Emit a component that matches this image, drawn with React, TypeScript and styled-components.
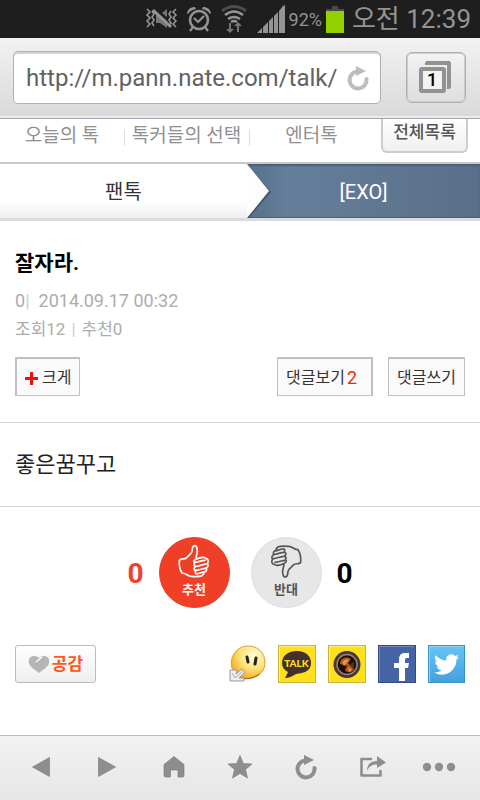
import React from "react";
import styled, { createGlobalStyle } from "styled-components";
import { FaTwitter } from "react-icons/fa";

const GlobalStyle = createGlobalStyle`
  *, *::before, *::after { box-sizing: border-box; }
  body { margin: 0; background: #fff; }
  button, input { font: inherit; color: inherit; margin: 0; }
  button { cursor: pointer; }
  a { color: inherit; text-decoration: none; }
  svg { display: block; flex: none; }
`;

const Page = styled.div`
  display: flex;
  flex-direction: column;
  min-height: 100vh;
  font-family: Roboto, "Noto Sans CJK KR", sans-serif;
  background: #fff;
  color: #333;
`;

/* Device status bar */
const StatusBar = styled.div`
  display: flex;
  align-items: center;
  justify-content: flex-end;
  gap: 8px;
  height: 38px;
  padding-right: 9px;
  background: #1e1e1e;
  color: #949494;
  white-space: nowrap;
`;
const Signal = styled.div`
  display: flex;
  align-items: center;
  gap: 4px;
  font-size: 18px;
`;
const Clock = styled.time`
  font-size: 26px;
  line-height: 36px;
`;

/* Address bar */
const AddressBar = styled.form`
  display: flex;
  align-items: center;
  gap: 25px;
  height: 81px;
  padding: 0 14px 2px 13px;
  background: linear-gradient(#f2f2f2, #d9d9d9);
  border-bottom: 1px solid #a5a5b0;
  box-shadow: inset 0 -2px 0 #ececec;
`;
const UrlField = styled.div`
  display: flex;
  align-items: center;
  gap: 6px;
  flex: 1;
  min-width: 0;
  height: 53px;
  padding: 2px 10px 0 12px;
  background: #fff;
  border: 1px solid #b0b0b8;
  border-radius: 5px;
  box-shadow: inset 0 2px 1px #d2d2d6;
`;
const UrlInput = styled.input`
  flex: 1;
  min-width: 0;
  padding: 0;
  border: 0;
  outline: 0;
  background: transparent;
  font-size: 24px;
  line-height: 32px;
  color: #626262;
`;
const PlainButton = styled.button`
  display: flex;
  align-items: center;
  justify-content: center;
  padding: 0;
  border: 0;
  background: none;
`;
const WindowsButton = styled(PlainButton)`
  width: 60px;
  height: 51px;
  border: 1px solid #aeaeae;
  border-radius: 6px;
  background: linear-gradient(#f3f3f3, #dedede);
  box-shadow: inset 0 0 0 1px #ccc;
`;

/* Category tabs */
const Tabs = styled.nav`
  display: grid;
  grid-template-columns: 124fr 125fr 125fr 94fr;
  height: 45px;
  padding-right: 12px;
  border-bottom: 2px solid #c8c8c8;
  font-size: 19px;
  line-height: 34px;
  color: #909090;
  white-space: nowrap;
`;
const Tab = styled.a`
  display: flex;
  justify-content: center;
  position: relative;
  & + &::before {
    content: "";
    position: absolute;
    left: 0;
    top: 10px;
    height: 17px;
    border-left: 1px solid #ddd;
  }
`;
const AllButton = styled.button`
  justify-self: end;
  width: 87px;
  height: 34px;
  padding: 0 0 6px;
  border: 2px solid #ccc;
  border-top: 0;
  border-radius: 0 0 6px 6px;
  background: linear-gradient(#fff, #efefef);
  font-size: 17px;
  line-height: 24px;
  font-weight: 500;
  color: #555;
`;

/* Breadcrumb */
const Crumbs = styled.nav`
  display: grid;
  grid-template-columns: 247fr 233fr;
  border-bottom: 3px solid #dadae0;
  font-size: 20px;
  line-height: 52px;
  text-align: center;
`;
const ParentCrumb = styled.a`
  padding-top: 2px;
  background: linear-gradient(#fff 70%, #eee);
`;
const CurrentCrumb = styled.a`
  position: relative;
  padding-top: 2px;
  background: linear-gradient(90deg, #567089, #657f9b 18%, #5a6e89);
  box-shadow: inset 0 2px 1px #4b607a, inset 0 -1px 1px #4b607a;
  color: #fff;
`;
const CrumbArrow = styled.svg`
  position: absolute;
  left: 0;
  top: 0;
`;

/* Article */
const Article = styled.article`
  flex: 1;
`;
const Header = styled.header`
  padding: 26px 15px 26px;
  border-bottom: 1px solid #d6d6d6;
`;
const Title = styled.h1`
  margin: 0 0 7px;
  font-size: 21px;
  line-height: 32px;
  font-weight: 700;
  color: #000;
`;
const Meta = styled.p`
  display: flex;
  gap: ${(p: { $small?: boolean }) => (p.$small ? 6 : 9)}px;
  margin: 0;
  font-size: ${(p: { $small?: boolean }) => (p.$small ? 17 : 18)}px;
  line-height: 29px;
  color: #acacac;
`;
const Divider = styled.span`
  color: #ccc;
`;
const Actions = styled.div`
  display: flex;
  gap: 15px;
  margin-top: 13px;
`;
const ActionButton = styled.button`
  display: flex;
  align-items: center;
  gap: 4px;
  height: 39px;
  padding: 2px 8px 0;
  border: 1px solid #bfbfc5;
  border-top-width: 2px;
  background: #fafafa;
  font-size: 16px;
  line-height: 24px;
  white-space: nowrap;
`;
const LargerButton = styled(ActionButton)`
  margin-right: auto;
  border-left-width: 2px;
`;
const CommentsButton = styled(ActionButton)`
  gap: 2px;
  padding-right: 14px;
  border-right-width: 2px;
`;
const CommentCount = styled.span`
  font-size: 18px;
  color: #f0280a;
`;
const Body = styled.p`
  margin: 0;
  padding: 25px 15px;
  border-bottom: 1px solid #d6d6d6;
  font-size: 22px;
  line-height: 33px;
  color: #222;
`;
const Votes = styled.div`
  display: flex;
  align-items: center;
  justify-content: center;
  gap: 15px;
  padding: 30px 0 37px;
`;
const VoteCount = styled.output`
  padding-top: 2px;
  font-size: 28px;
  line-height: 32px;
  font-weight: 700;
  color: ${(p: { $up?: boolean }) => (p.$up ? "#ef4030" : "#000")};
`;
const VoteGroup = styled.div`
  display: flex;
  gap: 21px;
`;
const VoteButton = styled.button<{ $up?: boolean }>`
  display: flex;
  flex-direction: column;
  align-items: center;
  width: 71px;
  height: 71px;
  padding: 6px 0 0;
  border: 1px solid ${(p) => (p.$up ? "#e84025" : "#dedede")};
  border-radius: 50%;
  background: ${(p) => (p.$up ? "#ef4027" : "#e7e7e7")};
  color: ${(p) => (p.$up ? "#fff" : "#555")};
  font-size: 13px;
  line-height: 20px;
  font-weight: 700;
`;
const ShareRow = styled.div`
  display: flex;
  align-items: center;
  justify-content: space-between;
  padding: 0 15px;
`;
const LikeButton = styled.button`
  display: flex;
  align-items: center;
  justify-content: center;
  gap: 2px;
  width: 81px;
  height: 38px;
  padding: 0;
  border: 1px solid #bbb;
  border-radius: 3px;
  background: linear-gradient(#fff, #eee);
  font-size: 17px;
  line-height: 24px;
  font-weight: 700;
  color: #ff5722;
`;
const ShareLinks = styled.div`
  display: flex;
  gap: 12px;
`;

/* Browser toolbar */
const Toolbar = styled.nav`
  display: grid;
  grid-template-columns: repeat(7, 1fr);
  height: 65px;
  padding: 0 8px 2px;
  border-top: 1px solid #bbb;
  background: linear-gradient(#f2f2f2, #e6e6e6);
  color: #8e8e8a;
`;

const ReloadIcon = ({ color }: { color: string }) => (
  <svg width="24" height="26" viewBox="0 0 24 26" fill="none">
    <path d="M11 6.500A8.500 8.500 0 1 0 20.500 14" stroke={color} strokeWidth="4" strokeLinecap="round" />
    <path d="M10 1 20 6 10 11Z" fill={color} />
  </svg>
);

const VibrateIcon = () => (
  <svg width="33" height="24" viewBox="0 0 33 24" fill="none" stroke="#949494" strokeWidth="2">
    <path d="M2 2 5 5 2 8 5 11 2 14 5 17 2 20M7 4l2 3-2 3 2 3-2 3 2 3M31 2l-3 3 3 3-3 3 3 3-3 3 3 3M26 4l-2 3 2 3-2 3 2 3-2 3" strokeWidth="1.6" />
    <path d="M11 8h4l7 6v7l-7-5h-4ZM17 6l5-4v8Z" fill="#777" stroke="none" />
    <path d="M8 3 26 20" strokeWidth="3" />
  </svg>
);
const AlarmIcon = () => (
  <svg width="26" height="26" viewBox="0 0 26 26" fill="none" stroke="#949494">
    <circle cx="13" cy="14" r="9" strokeWidth="2.6" />
    <path d="m8 12 4 4 6-6M7 21l-3 4M19 21l3 4" strokeWidth="2.2" />
    <path d="M1 7C2 3 5 1 9 1l1 2C6 4 4 5 2 8ZM25 7C24 3 21 1 17 1l-1 2c4 1 6 2 8 5Z" fill="#949494" stroke="none" />
  </svg>
);
const WifiIcon = () => (
  <svg width="28" height="28" viewBox="0 0 28 28" fill="none">
    <path d="M2 6Q14-3 26 6" stroke="#4c4c4c" strokeWidth="3" />
    <path d="M5 10Q14 3 23 10M8 14q6-4 12 0M11 17q3-2 6 0" stroke="#949494" strokeWidth="2.6" />
    <path d="M9 18v6H6l4 4 4-4h-3v-6ZM17 27v-6h-3l4-4 4 4h-3v6Z" fill="#777" />
  </svg>
);
const BarsIcon = () => (
  <svg width="29" height="28" viewBox="0 0 29 28" fill="#949494">
    <path d="M1 28 6 23V28ZM7 28V22l5-5V28ZM13 28V16l4-4V28ZM18 28V11l4-4V28ZM23 28V6l4-5 2-1V28Z" />
  </svg>
);
const BatteryIcon = () => (
  <svg width="18" height="28" viewBox="0 0 18 28">
    <path d="M6 1h6v3h6v2H0V4h6Z" fill="#4a4a4a" />
    <path d="M0 6h18v22H0Z" fill="#92d000" />
  </svg>
);
const WindowsIcon = () => (
  <svg width="36" height="34" viewBox="0 0 36 34">
    <path d="M9 5V3h22v24h-2" fill="none" stroke="#929292" strokeWidth="4" strokeLinejoin="round" />
    <rect x="3" y="9" width="23" height="22" rx="1" fill="#f3f3f3" stroke="#929292" strokeWidth="4" />
    <text x="14" y="26" textAnchor="middle" fontSize="18" fontFamily="Roboto" fontWeight="500" fill="#000">1</text>
  </svg>
);

const Thumb = ({ down }: { down?: boolean }) => (
  <svg width="34" height="36" viewBox="205 71 102 108" fill="none" stroke="currentColor" strokeWidth="5" strokeLinecap="round" strokeLinejoin="round">
    <g transform={down ? "rotate(180 256 123)" : undefined}>
      <path d="M258 76C250 77 251 87 250 93C248 101 239 106 233 113C227 118 214 113 212 121C211 134 214 149 220 158C229 157 236 167 248 168C260 169 274 169 280 166C286 162 286 158 285 155C292 156 297 148 292 143C299 141 300 132 296 129C301 123 299 115 291 114C286 108 277 111 263 116C260 107 270 96 265 84C264 78 262 76 258 76Z" />
      <path d="M263 116C255 119 253 125 257 126C266 127 278 120 289 120M259 127C254 132 256 138 260 138C272 138 282 132 293 131M260 139C253 145 257 151 262 150C271 150 281 145 290 144M262 151C257 157 261 162 267 160L285 155" />
    </g>
  </svg>
);

const HeartIcon = () => (
  <svg width="22" height="18" viewBox="0 0 22 18" fill="#b5b5b5">
    <path d="M11 18C6 14 2 12 1 8C0 3 3 1 6 1C9 1 10 2 11 3C12 2 13 1 16 1C19 1 22 3 21 8C20 12 16 14 11 18Z" />
    <path d="M8 7 14 2" stroke="#fff" strokeWidth="1.4" />
  </svg>
);

const EmoticonIcon = () => (
  <svg width="37" height="38" viewBox="0 0 37 38">
    <defs>
      <radialGradient id="face" cx=".65" cy=".3" r=".75">
        <stop offset="0" stopColor="#fffde0" />
        <stop offset=".55" stopColor="#fee272" />
        <stop offset="1" stopColor="#f5a51d" />
      </radialGradient>
    </defs>
    <path d="M19 1C29 1 36 8 36 17S31 31 23 33 6 32 3 23C0 13 7 1 19 1Z" fill="url(#face)" stroke="#dc9c43" />
    <path d="m18 12 1 5M27 13l-1 6" stroke="#292015" strokeWidth="3" strokeLinecap="round" />
    <path d="M6 31C12 35 23 35 30 29" stroke="#a35a26" fill="none" />
    <path d="M1 25h7l-1 4 6-5 3 3-6 6h5v3H1Z" fill="#eee" stroke="#999" />
    <path d="m3 28 3 5 8-7" stroke="#aaa" fill="none" />
  </svg>
);
const TalkIcon = () => (
  <svg width="38" height="38" viewBox="0 0 38 38">
    <rect x=".5" y=".5" width="37" height="37" fill="#ffe01c" stroke="#c9b340" />
    <path d="M1.5 36V1.5H36" fill="none" stroke="#fff078" />
    <path d="M19 6C28 6 33 11 33 18S28 28 18 29C15 31 11 33 7 33L10 27C6 25 4 22 4 18 4 10 11 6 19 6Z" fill="#44312f" />
    <text x="18.5" y="22" textAnchor="middle" fontFamily="Lato" fontWeight="900" fontSize="10" fill="#ffe01c">TALK</text>
  </svg>
);
const StoryIcon = () => (
  <svg width="38" height="38" viewBox="0 0 38 38">
    <rect x=".5" y=".5" width="37" height="37" fill="#ffe01c" stroke="#c9b340" />
    <path d="M1.5 36V1.5H36" fill="none" stroke="#fff078" />
    <circle cx="19" cy="19.5" r="13.5" fill="#493536" />
    <circle cx="19" cy="19.5" r="10" fill="#1c0f0c" stroke="#958577" strokeWidth="1.5" />
    <path d="M12 19C12 13 18 11 23 14L20 18 26 24C23 29 18 27 17 25L19 21Z" fill="#b6541c" />
    <path d="m14 17 4-3 3 1-5 6ZM20 22l4 3-3 2Z" fill="#e29845" />
    <path d="m21 20 5-3v6Z" fill="#493c16" />
  </svg>
);
const FacebookIcon = () => (
  <svg width="38" height="38" viewBox="0 0 38 38">
    <rect x=".5" y=".5" width="37" height="37" fill="#4563a5" stroke="#304b88" />
    <path d="M1.5 36V1.5H36" fill="none" stroke="#7188bd" />
    <path d="M21 36V23H16V18H21V15C21 10 23 8 27 8H31V13H29C27 13 27 14 27 18H31L30 23H27V36Z" fill="#fff" />
  </svg>
);
const TwitterTile = styled.span`
  display: grid;
  place-items: center;
  width: 37px;
  height: 38px;
  border: 1px solid #3a93c9;
  background: linear-gradient(#67c4f3, #43a1e0);
  box-shadow: inset 1px 1px 0 #8bd3f7;
  color: #fff;
  font-size: 25px;
`;

const ShareIcon = () => (
  <svg width="28" height="24" viewBox="0 0 28 24" fill="none">
    <path d="M12 4H2.500V20.500H21.500V16" stroke="currentColor" strokeWidth="2.600" strokeLinejoin="round" strokeLinecap="round" />
    <path d="M8 16C8 9 12 6 18 6V1L27 7.500 18 13V9.500C13 9.500 10 11 8 16Z" fill="currentColor" />
  </svg>
);
const Shape = ({ d, w = 24 }: { d: string; w?: number }) => (
  <svg width={w} height="24" viewBox={`0 0 ${w} 24`} fill="currentColor" stroke="#777773" strokeWidth=".6" strokeLinejoin="round">
    <path d={d} />
  </svg>
);

const tools = [
  { label: "뒤로", icon: <Shape d="M20.500 2.500V21.500L3.500 12Z" /> },
  { label: "앞으로", icon: <Shape d="M3.500 2.500V21.500L20.500 12Z" /> },
  { label: "홈", icon: <Shape d="M12 1.500 22 9.500V20.500Q22 22 20.500 22H16V15H8.500V22H3.500Q2 22 2 20.500V9.500Z" /> },
  { label: "북마크", icon: <Shape d="M12 .5 15.300 8.500 24 9 17.500 14.500 19.500 23 12 18.500 4.500 23 6.500 14.500 0 9 8.700 8.500Z" /> },
  { label: "새로고침", icon: <ReloadIcon color="#8e8e8a" /> },
  { label: "공유", icon: <ShareIcon /> },
  {
    label: "더보기",
    icon: (
      <svg width="34" height="10" viewBox="0 0 34 10" fill="currentColor">
        <circle cx="5" cy="5" r="4.200" /><circle cx="17" cy="5" r="4.200" /><circle cx="29" cy="5" r="4.200" />
      </svg>
    ),
  },
];

export default function App() {
  return (
    <Page>
      <GlobalStyle />
      <StatusBar>
        <VibrateIcon />
        <AlarmIcon />
        <WifiIcon />
        <Signal><BarsIcon />92%<BatteryIcon /></Signal>
        <Clock>오전 12:39</Clock>
      </StatusBar>

      <AddressBar onSubmit={(e) => e.preventDefault()}>
        <UrlField>
          <UrlInput aria-label="주소" defaultValue="http://m.pann.nate.com/talk/" />
          <PlainButton type="button" aria-label="새로고침"><ReloadIcon color="#bdbdbd" /></PlainButton>
        </UrlField>
        <WindowsButton type="button" aria-label="창 목록"><WindowsIcon /></WindowsButton>
      </AddressBar>

      <Tabs>
        <Tab href="#today">오늘의 톡</Tab>
        <Tab href="#picks">톡커들의 선택</Tab>
        <Tab href="#enter">엔터톡</Tab>
        <AllButton type="button">전체목록</AllButton>
      </Tabs>

      <Crumbs>
        <ParentCrumb href="#fan">팬톡</ParentCrumb>
        <CurrentCrumb href="#exo">
          <CrumbArrow width="30" height="54" viewBox="0 0 30 54">
            <path d="M0 1 24 28 0 56Z" fill="#2d3f55" opacity=".6" />
            <path d="M0 0 22 27 0 54Z" fill="#fdfdfd" />
          </CrumbArrow>
          [EXO]
        </CurrentCrumb>
      </Crumbs>

      <Article>
        <Header>
          <Title>잘자라.</Title>
          <Meta><span>0<Divider>|</Divider></span><time>2014.09.17 00:32</time></Meta>
          <Meta $small><span>조회12</span><Divider>|</Divider><span>추천0</span></Meta>
          <Actions>
            <LargerButton type="button">
              <svg width="13" height="13" viewBox="0 0 13 13"><path d="M6.500 0V13M0 6.500H13" stroke="#f00f0f" strokeWidth="3" /></svg>
              크게
            </LargerButton>
            <CommentsButton type="button">댓글보기<CommentCount>2</CommentCount></CommentsButton>
            <ActionButton type="button">댓글쓰기</ActionButton>
          </Actions>
        </Header>
        <Body>좋은꿈꾸고</Body>
        <Votes>
          <VoteCount $up>0</VoteCount>
          <VoteGroup>
            <VoteButton type="button" $up><Thumb />추천</VoteButton>
            <VoteButton type="button"><Thumb down />반대</VoteButton>
          </VoteGroup>
          <VoteCount>0</VoteCount>
        </Votes>
        <ShareRow>
          <LikeButton type="button"><HeartIcon />공감</LikeButton>
          <ShareLinks>
            <a href="#nateon" aria-label="네이트온"><EmoticonIcon /></a>
            <a href="#talk" aria-label="카카오톡"><TalkIcon /></a>
            <a href="#story" aria-label="카카오스토리"><StoryIcon /></a>
            <a href="#facebook" aria-label="페이스북"><FacebookIcon /></a>
            <a href="#twitter" aria-label="트위터"><TwitterTile><FaTwitter /></TwitterTile></a>
          </ShareLinks>
        </ShareRow>
      </Article>

      <Toolbar>
        {tools.map((t) => (
          <PlainButton key={t.label} type="button" aria-label={t.label}>{t.icon}</PlainButton>
        ))}
      </Toolbar>
    </Page>
  );
}
